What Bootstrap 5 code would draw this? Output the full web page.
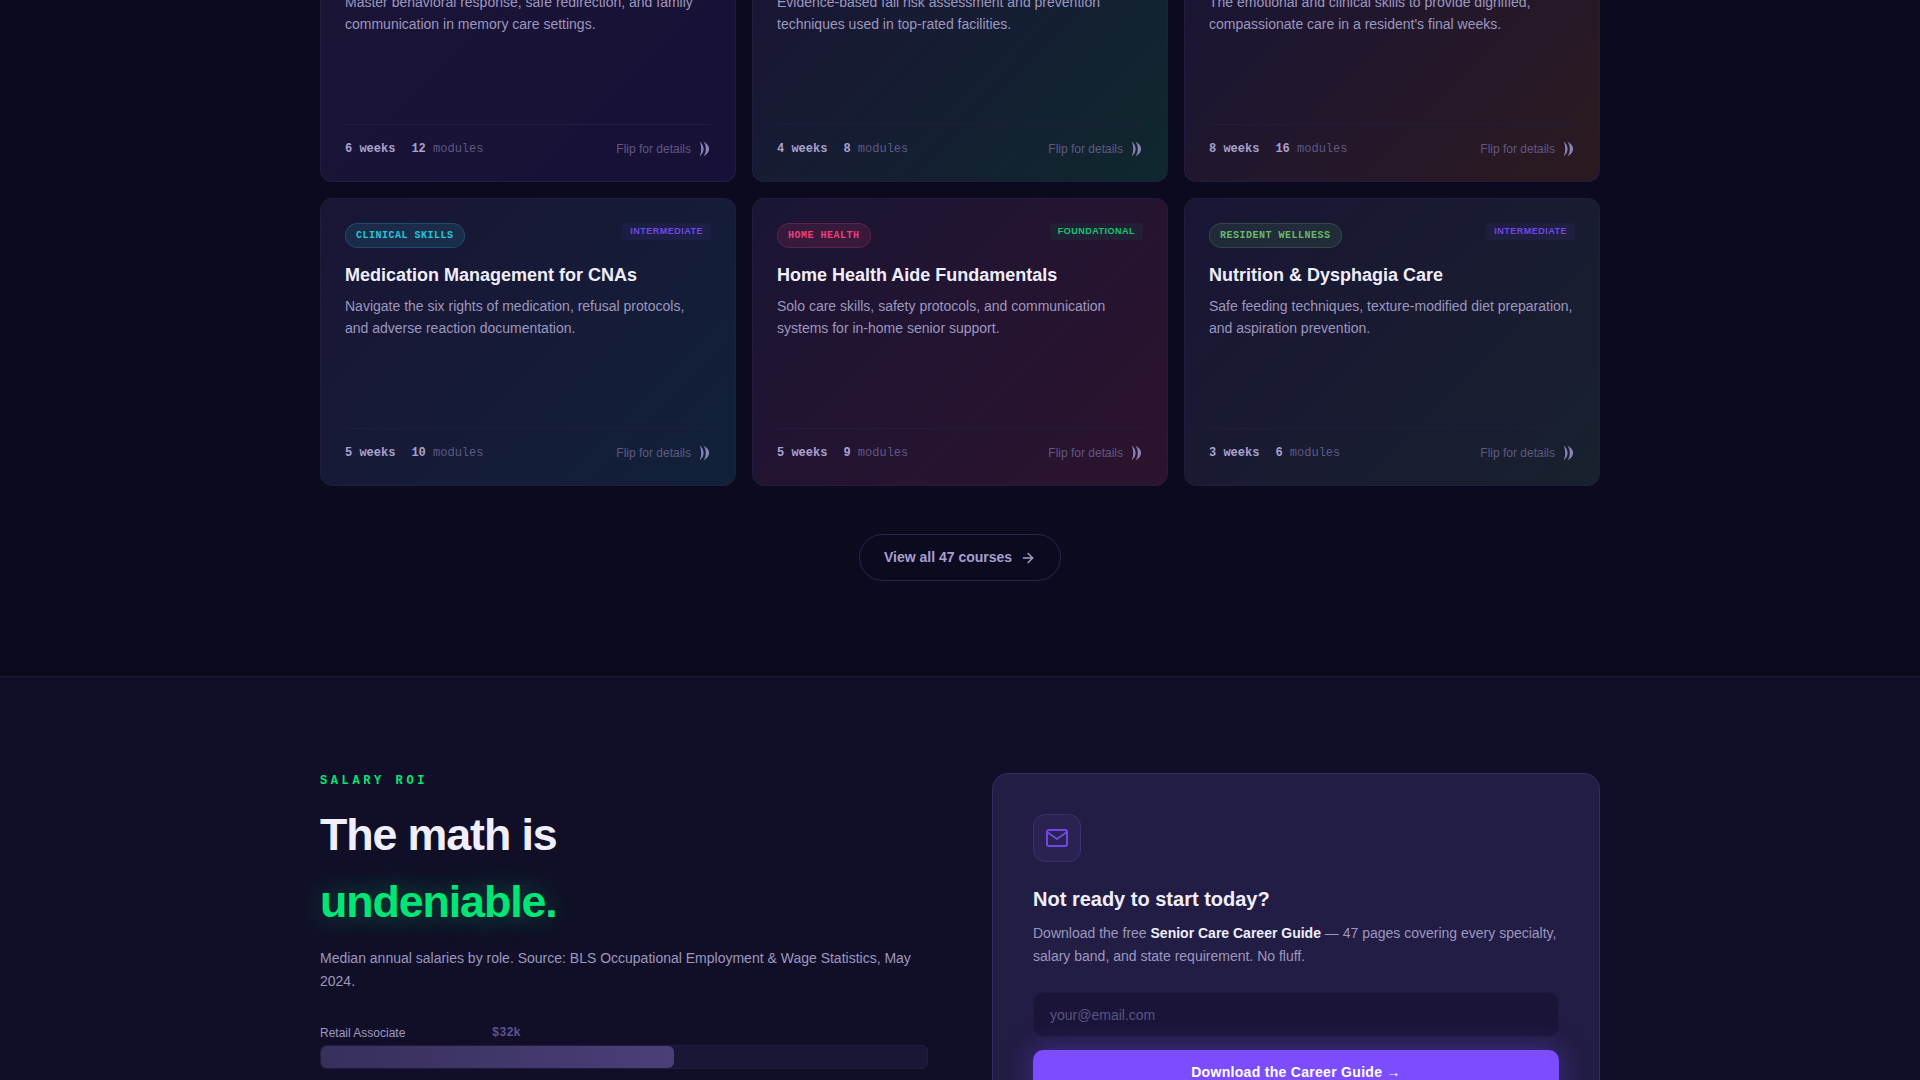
<!DOCTYPE html>
<html lang="en">
<head>
  <meta charset="UTF-8">
  <meta name="viewport" content="width=device-width, initial-scale=1.0">
  <title>Senior Care Courses</title>
  <link href="https://cdn.jsdelivr.net/npm/bootstrap@5.3.0/dist/css/bootstrap.min.css" rel="stylesheet">
  <style>
    html, body { height: 100vh; overflow: hidden; }
    body { background: #0c0a1f; font-family: "Liberation Sans", Arial, sans-serif; color: #9d97bf; }
    .mono { font-family: "Liberation Mono", "Courier New", monospace; }
    .page-wrap { width: 1280px; margin: 0 auto; }

    /* page is photographed part way down: first row of cards starts above the frame */
    .courses-sec { margin-top: -35px; padding-bottom: 95px; }
    .course-card { border: 1px solid #221d40; border-radius: 12px; padding: 24px 24px 23px; display: flex; flex-direction: column; height: 288px; }
    .course-card.cut { padding-top: 10px; border-top: 0; height: 201px; }
    .tint-violet { background: linear-gradient(135deg, #1a1535 0%, #171038 100%); }
    .tint-green { background: linear-gradient(135deg, #1a1535 0%, #0f282e 100%); }
    .tint-amber { background: linear-gradient(135deg, #1a1535 0%, #2c1a20 100%); }
    .tint-teal { background: linear-gradient(135deg, #1a1535 0%, #11213a 100%); }
    .tint-pink { background: linear-gradient(135deg, #1a1535 0%, #2d132d 100%); }
    .tint-sage { background: linear-gradient(135deg, #1a1535 0%, #18212e 100%); }

    .course-tag { font-size: 10px; font-weight: 700; letter-spacing: .5px; line-height: 15px; padding: 4px 10px; border-radius: 100px; border: 1px solid; text-transform: uppercase; }
    .tag-teal { color: #26c6da; background: rgba(38, 198, 218, .12); border-color: rgba(38, 198, 218, .22); }
    .tag-pink { color: #ec407a; background: rgba(236, 64, 122, .12); border-color: rgba(236, 64, 122, .22); }
    .tag-sage { color: #66bb6a; background: rgba(102, 187, 106, .12); border-color: rgba(102, 187, 106, .22); }
    .level-tag { font-size: 9px; font-weight: 700; letter-spacing: .5px; line-height: 11px; padding: 3px 8px; border-radius: 4px; text-transform: uppercase; }
    .level-mid { color: #7148e6; background: rgba(124, 77, 255, .07); }
    .level-base { color: #14c870; background: rgba(0, 230, 118, .06); }

    .course-title { font-size: 18px; font-weight: 700; line-height: 23px; color: #f0eeff; margin: 16px 0 8px; }
    .course-desc { font-size: 14px; line-height: 22px; color: #9d97bf; margin: 0; }
    .course-foot { margin-top: auto; padding-top: 15px; border-top: 1px solid #221d3e; height: 34px; }
    .course-meta { font-size: 12px; line-height: 18px; color: #5f5883; }
    .course-meta b { color: #a9a2cf; }
    .flip-hint { font-size: 12px; color: #5f5883; }

    .all-btn { width: 202px; height: 47px; border: 1px solid #2a2450; border-radius: 100px; color: #a79fd0; font-size: 14px; font-weight: 700; text-decoration: none; }
    .more-row { margin-top: 48px; }

    .roi-sec { background: #110f28; border-top: 1px solid #1e1a3a; padding-top: 96px; height: 500px; }
    .roi-grid { display: grid; grid-template-columns: 608px 608px; gap: 64px; }
    .roi-label { font-size: 12px; font-weight: 700; letter-spacing: 3.6px; color: #00e676; line-height: 14px; padding-top: 1px; }
    .roi-head { font-size: 44.8px; font-weight: 700; line-height: 67px; letter-spacing: -1.12px; color: #f0eeff; margin: 13px 0 12px; }
    .roi-head span { color: #00e676; text-shadow: 0 0 30px rgba(0, 230, 118, .4); }
    .roi-desc { font-size: 14px; line-height: 23px; color: #9d97bf; margin-bottom: 31px; }
    .bar-label { font-size: 12px; line-height: 18px; width: 172px; color: #9f98c4; }
    .bar-val { font-size: 12px; font-weight: 700; line-height: 18px; color: #5c5294; }
    .bar-track { height: 24px; margin-top: 3px; background: #1a1635; border: 1px solid #211c40; border-radius: 6px; overflow: hidden; }
    .bar-fill { height: 100%; background: linear-gradient(90deg, #372f5c, #4a3f78); border-radius: 6px; }

    .guide-card { background: #221d44; border: 1px solid #332b62; border-radius: 16px; padding: 40px; }
    .mail-box { width: 48px; height: 48px; border-radius: 12px; background: #2a2250; border: 1px solid #3a3070; color: #7048e8; margin-bottom: 24px; }
    .guide-title { font-size: 20px; font-weight: 700; line-height: 26px; color: #f0eeff; margin-bottom: 10px; }
    .guide-desc { font-size: 14px; line-height: 23px; color: #9d97bf; margin-bottom: 24px; }
    .guide-desc strong { color: #f0eeff; }
    .guide-input { height: 45px; background: #1a1538; border: 1px solid #1f1a40; border-radius: 10px; color: #f0eeff; font-size: 14px; padding: 0 16px; }
    .guide-input::placeholder { color: #5a5380; }
    .guide-input:focus { background: #1a1538; border-color: #1f1a40; color: #f0eeff; box-shadow: none; }
    .guide-btn { height: 44px; margin-top: 13px; background: #7c4dff; border: 0; border-radius: 10px; color: #fff; font-size: 14px; font-weight: 700; letter-spacing: .3px; box-shadow: 0 0 30px rgba(124, 77, 255, .4); }
  </style>
</head>
<body>

<section class="courses-sec">
  <div class="page-wrap">
    <div class="row g-3">
      <div class="col-4">
        <div class="course-card cut tint-violet">
          <p class="course-desc">Master behavioral response, safe redirection, and family communication in memory care settings.</p>
          <div class="course-foot d-flex justify-content-between align-items-center">
            <div class="course-meta mono d-flex gap-3"><span><b>6 weeks</b></span><span><b>12</b> modules</span></div>
            <div class="flip-hint d-flex align-items-center gap-2">Flip for details <svg width="12" height="16" viewBox="0 0 12 16" fill="#8a83b8"><path d="M.5 .5C6 5 6 11 .5 15.5C2.8 11 2.8 5 .5 .5Z"/><path d="M4.5 .5C12 5 12 11 4.5 15.5C7.6 11 7.6 5 4.5 .5Z"/></svg></div>
          </div>
        </div>
      </div>
      <div class="col-4">
        <div class="course-card cut tint-green">
          <p class="course-desc">Evidence-based fall risk assessment and prevention techniques used in top-rated facilities.</p>
          <div class="course-foot d-flex justify-content-between align-items-center">
            <div class="course-meta mono d-flex gap-3"><span><b>4 weeks</b></span><span><b>8</b> modules</span></div>
            <div class="flip-hint d-flex align-items-center gap-2">Flip for details <svg width="12" height="16" viewBox="0 0 12 16" fill="#8a83b8"><path d="M.5 .5C6 5 6 11 .5 15.5C2.8 11 2.8 5 .5 .5Z"/><path d="M4.5 .5C12 5 12 11 4.5 15.5C7.6 11 7.6 5 4.5 .5Z"/></svg></div>
          </div>
        </div>
      </div>
      <div class="col-4">
        <div class="course-card cut tint-amber">
          <p class="course-desc">The emotional and clinical skills to provide dignified, compassionate care in a resident's final weeks.</p>
          <div class="course-foot d-flex justify-content-between align-items-center">
            <div class="course-meta mono d-flex gap-3"><span><b>8 weeks</b></span><span><b>16</b> modules</span></div>
            <div class="flip-hint d-flex align-items-center gap-2">Flip for details <svg width="12" height="16" viewBox="0 0 12 16" fill="#8a83b8"><path d="M.5 .5C6 5 6 11 .5 15.5C2.8 11 2.8 5 .5 .5Z"/><path d="M4.5 .5C12 5 12 11 4.5 15.5C7.6 11 7.6 5 4.5 .5Z"/></svg></div>
          </div>
        </div>
      </div>

      <div class="col-4">
        <div class="course-card tint-teal">
          <div class="d-flex justify-content-between align-items-start">
            <span class="course-tag tag-teal mono">Clinical Skills</span>
            <span class="level-tag level-mid">Intermediate</span>
          </div>
          <h3 class="course-title">Medication Management for CNAs</h3>
          <p class="course-desc">Navigate the six rights of medication, refusal protocols, and adverse reaction documentation.</p>
          <div class="course-foot d-flex justify-content-between align-items-center">
            <div class="course-meta mono d-flex gap-3"><span><b>5 weeks</b></span><span><b>10</b> modules</span></div>
            <div class="flip-hint d-flex align-items-center gap-2">Flip for details <svg width="12" height="16" viewBox="0 0 12 16" fill="#8a83b8"><path d="M.5 .5C6 5 6 11 .5 15.5C2.8 11 2.8 5 .5 .5Z"/><path d="M4.5 .5C12 5 12 11 4.5 15.5C7.6 11 7.6 5 4.5 .5Z"/></svg></div>
          </div>
        </div>
      </div>
      <div class="col-4">
        <div class="course-card tint-pink">
          <div class="d-flex justify-content-between align-items-start">
            <span class="course-tag tag-pink mono">Home Health</span>
            <span class="level-tag level-base">Foundational</span>
          </div>
          <h3 class="course-title">Home Health Aide Fundamentals</h3>
          <p class="course-desc">Solo care skills, safety protocols, and communication systems for in-home senior support.</p>
          <div class="course-foot d-flex justify-content-between align-items-center">
            <div class="course-meta mono d-flex gap-3"><span><b>5 weeks</b></span><span><b>9</b> modules</span></div>
            <div class="flip-hint d-flex align-items-center gap-2">Flip for details <svg width="12" height="16" viewBox="0 0 12 16" fill="#8a83b8"><path d="M.5 .5C6 5 6 11 .5 15.5C2.8 11 2.8 5 .5 .5Z"/><path d="M4.5 .5C12 5 12 11 4.5 15.5C7.6 11 7.6 5 4.5 .5Z"/></svg></div>
          </div>
        </div>
      </div>
      <div class="col-4">
        <div class="course-card tint-sage">
          <div class="d-flex justify-content-between align-items-start">
            <span class="course-tag tag-sage mono">Resident Wellness</span>
            <span class="level-tag level-mid">Intermediate</span>
          </div>
          <h3 class="course-title">Nutrition &amp; Dysphagia Care</h3>
          <p class="course-desc">Safe feeding techniques, texture-modified diet preparation, and aspiration prevention.</p>
          <div class="course-foot d-flex justify-content-between align-items-center">
            <div class="course-meta mono d-flex gap-3"><span><b>3 weeks</b></span><span><b>6</b> modules</span></div>
            <div class="flip-hint d-flex align-items-center gap-2">Flip for details <svg width="12" height="16" viewBox="0 0 12 16" fill="#8a83b8"><path d="M.5 .5C6 5 6 11 .5 15.5C2.8 11 2.8 5 .5 .5Z"/><path d="M4.5 .5C12 5 12 11 4.5 15.5C7.6 11 7.6 5 4.5 .5Z"/></svg></div>
          </div>
        </div>
      </div>
    </div>

    <div class="more-row d-flex justify-content-center">
      <a href="#" class="all-btn d-flex align-items-center justify-content-center gap-2">View all 47 courses
        <svg width="16" height="16" viewBox="0 0 24 24" fill="none" stroke="currentColor" stroke-width="2" stroke-linecap="round" stroke-linejoin="round"><line x1="5" y1="12" x2="19" y2="12"/><polyline points="12 5 19 12 12 19"/></svg>
      </a>
    </div>
  </div>
</section>

<section class="roi-sec">
  <div class="page-wrap roi-grid">
    <div>
      <div class="roi-label mono">SALARY ROI</div>
      <h2 class="roi-head">The math is<br><span>undeniable.</span></h2>
      <p class="roi-desc">Median annual salaries by role. Source: BLS Occupational Employment &amp; Wage Statistics, May 2024.</p>
      <div class="d-flex align-items-center">
        <span class="bar-label">Retail Associate</span>
        <span class="bar-val mono">$32k</span>
      </div>
      <div class="bar-track"><div class="bar-fill" style="width: 58.3%"></div></div>
    </div>
    <div class="guide-card">
      <div class="mail-box d-flex align-items-center justify-content-center">
        <svg width="24" height="24" viewBox="0 0 24 24" fill="none" stroke="currentColor" stroke-width="2" stroke-linecap="round" stroke-linejoin="round"><path d="M4 4h16c1.1 0 2 .9 2 2v12c0 1.1-.9 2-2 2H4c-1.1 0-2-.9-2-2V6c0-1.1.9-2 2-2z"/><polyline points="22,6 12,13 2,6"/></svg>
      </div>
      <h3 class="guide-title">Not ready to start today?</h3>
      <p class="guide-desc">Download the free <strong>Senior Care Career Guide</strong> — 47 pages covering every specialty, salary band, and state requirement. No fluff.</p>
      <input type="email" class="form-control guide-input" placeholder="your@email.com">
      <button type="button" class="btn guide-btn w-100">Download the Career Guide →</button>
    </div>
  </div>
</section>

</body>
</html>
